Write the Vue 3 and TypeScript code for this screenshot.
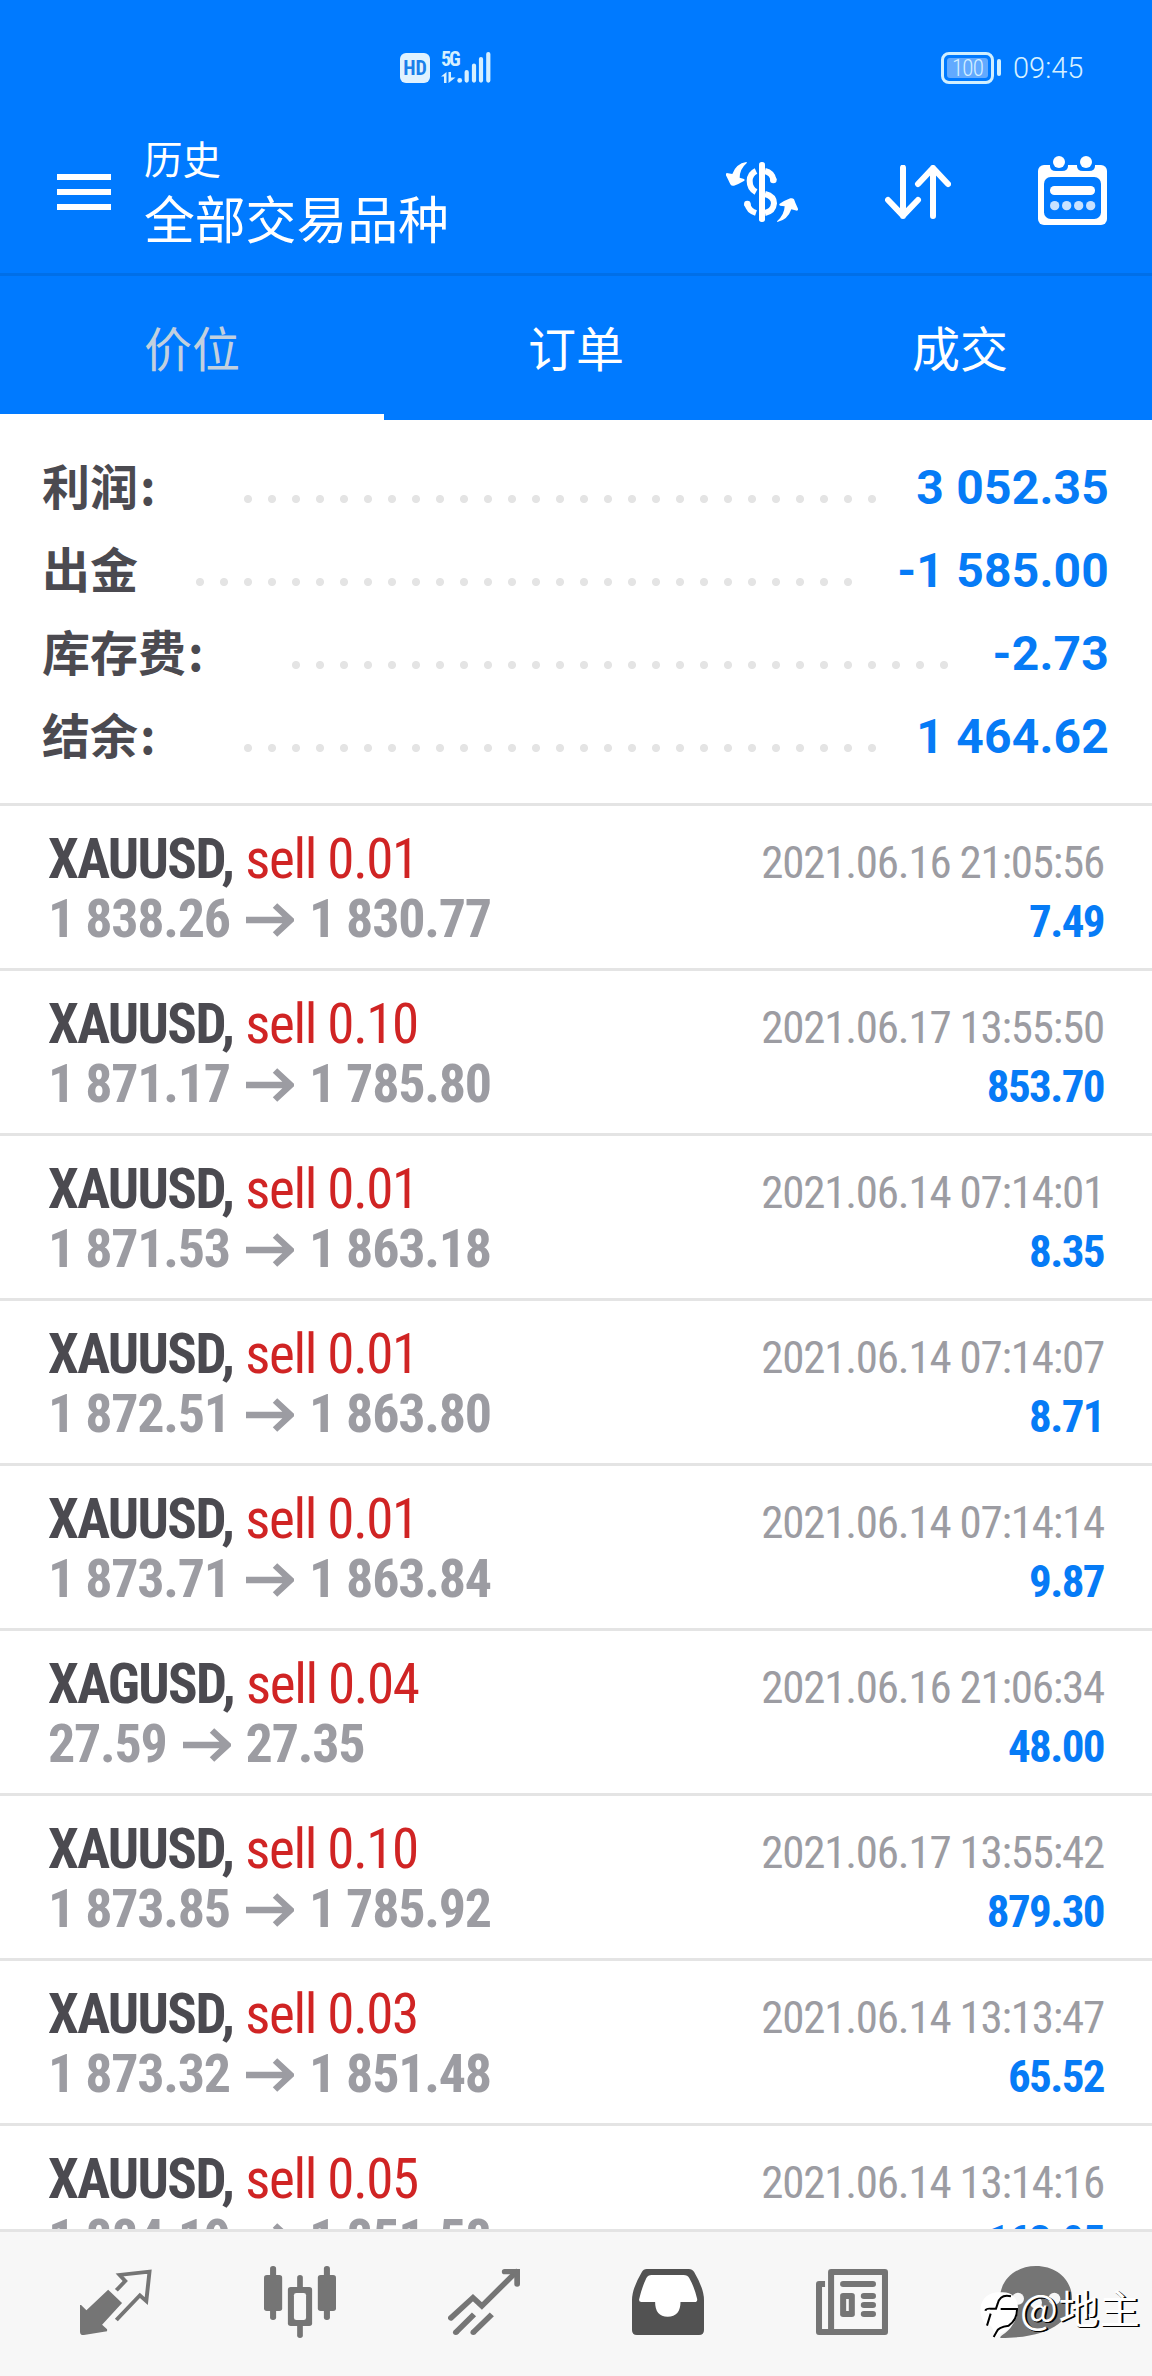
<script setup lang="ts">
interface SummaryRow {
  label: string
  colon: boolean
  value: string
  leaderStart: number
  dots: number
}

interface Deal {
  symbol: string
  volume: string
  open: string
  close: string
  time: string
  profit: string
}

const tabs: string[] = ['价位', '订单', '成交']

const summary: SummaryRow[] = [
  { label: '利润', colon: true, value: '3 052.35', leaderStart: 236, dots: 27 },
  { label: '出金', colon: false, value: '-1 585.00', leaderStart: 188, dots: 28 },
  { label: '库存费', colon: true, value: '-2.73', leaderStart: 284, dots: 28 },
  { label: '结余', colon: true, value: '1 464.62', leaderStart: 236, dots: 27 },
]

const deals: Deal[] = [
  { symbol: 'XAUUSD', volume: '0.01', open: '1 838.26', close: '1 830.77', time: '2021.06.16 21:05:56', profit: '7.49' },
  { symbol: 'XAUUSD', volume: '0.10', open: '1 871.17', close: '1 785.80', time: '2021.06.17 13:55:50', profit: '853.70' },
  { symbol: 'XAUUSD', volume: '0.01', open: '1 871.53', close: '1 863.18', time: '2021.06.14 07:14:01', profit: '8.35' },
  { symbol: 'XAUUSD', volume: '0.01', open: '1 872.51', close: '1 863.80', time: '2021.06.14 07:14:07', profit: '8.71' },
  { symbol: 'XAUUSD', volume: '0.01', open: '1 873.71', close: '1 863.84', time: '2021.06.14 07:14:14', profit: '9.87' },
  { symbol: 'XAGUSD', volume: '0.04', open: '27.59', close: '27.35', time: '2021.06.16 21:06:34', profit: '48.00' },
  { symbol: 'XAUUSD', volume: '0.10', open: '1 873.85', close: '1 785.92', time: '2021.06.17 13:55:42', profit: '879.30' },
  { symbol: 'XAUUSD', volume: '0.03', open: '1 873.32', close: '1 851.48', time: '2021.06.14 13:13:47', profit: '65.52' },
  { symbol: 'XAUUSD', volume: '0.05', open: '1 884.19', close: '1 851.58', time: '2021.06.14 13:14:16', profit: '163.05' },
]
</script>

<template>
  <div class="screen">
    <div class="status">
      <span class="hd">HD</span>
      <div class="network">
        <span class="gen">5G</span>
        <svg class="signal" width="52" height="33" viewBox="0 0 52 33">
          <path d="M1 26.500L6.500 22V33H4V26.500ZM8.500 22H11V27.500H15.500L8.500 33Z" fill="#d6efff" />
          <circle cx="19.700" cy="30.400" r="2.400" fill="#d6efff" />
          <path d="M26.700 22V30.600M34 15.500V30.600M41 9V30.600M48.300 4V30.600" stroke="#d6efff" stroke-width="4.200" stroke-linecap="round" />
        </svg>
      </div>
      <div class="battery"><span>100</span></div>
      <i class="battery-cap"></i>
      <span class="clock">09:45</span>
    </div>

    <header class="bar">
      <div class="menu"><i></i><i></i><i></i></div>
      <div class="titles">
        <div class="small">历史</div>
        <div class="big">全部交易品种</div>
      </div>
      <svg class="ic-money" width="72" height="60" viewBox="78 96 216 180">
        <g fill="#fff">
          <path d="M139 96Q108 101 97 132L80 129Q76 132 79 138Q86 152 91 163Q95 169 102 167Q118 161 133 152Q135 149 132 147L119 143Q119 117 141 98Z" />
          <path d="M232 276Q263 270 274 238L291 242Q296 240 293 234Q286 220 282 208Q278 203 271 205Q255 211 239 221Q236 224 240 227L254 229Q253 255 231 274Z" />
          <rect x="177" y="96" width="18" height="180" rx="8" />
        </g>
        <path d="M168 123Q149 132 149 153Q149 176 168 186M195 123Q217 128 221 151M142 222Q146 242 168 249M195 192Q222 199 222 220Q220 244 195 249" fill="none" stroke="#fff" stroke-width="18" />
        <circle cx="220" cy="150" r="10" fill="#fff" /><circle cx="142" cy="222" r="10" fill="#fff" />
      </svg>
      <svg class="ic-sort" width="66" height="54" viewBox="555 105 198 162">
        <path d="M609 113V258M564 210L609 257L654 210M699 258V114M654 162L699 114L744 162" fill="none" stroke="#fff" stroke-width="18" stroke-linecap="round" stroke-linejoin="round" />
      </svg>
      <svg class="ic-cal" width="69" height="69" viewBox="1014 78 207 207">
        <rect x="1014" y="105" width="207" height="180" rx="18" fill="#fff" />
        <path d="M1050 102V108Q1050 123 1068 123H1086Q1104 123 1104 108V102ZM1131 102V108Q1131 123 1149 123H1167Q1185 123 1185 108V102Z" fill="#007aff" />
        <rect x="1032" y="141" width="171" height="126" rx="20" fill="#007aff" />
        <circle cx="1077" cy="96" r="18" fill="#fff" /><circle cx="1158" cy="96" r="18" fill="#fff" />
        <rect x="1050" y="168" width="135" height="27" rx="13" fill="#fff" />
        <g fill="#c8e2ff"><circle cx="1064" cy="227" r="14" /><circle cx="1100" cy="227" r="14" /><circle cx="1136" cy="227" r="14" /><circle cx="1172" cy="227" r="14" /></g>
      </svg>
    </header>

    <nav class="tabs">
      <div v-for="(tab, i) in tabs" :key="tab" class="tab" :class="{ active: i === 0 }">{{ tab }}</div>
    </nav>

    <section class="summary">
      <div v-for="row in summary" :key="row.label" class="sum-row">
        <span class="label" :style="{ width: row.leaderStart - 42 + 'px' }">{{ row.label }}<span v-if="row.colon" class="colon">:</span></span>
        <span class="leader" :style="{ width: row.dots * 24 + 'px' }"></span>
        <span class="value">{{ row.value }}</span>
      </div>
    </section>

    <main class="deals">
      <div v-for="deal in deals" :key="deal.time + deal.profit" class="deal">
        <div class="line">
          <span class="symbol">{{ deal.symbol }},</span>
          <span class="side">sell {{ deal.volume }}</span>
          <span class="time">{{ deal.time }}</span>
        </div>
        <div class="line">
          <span class="price">{{ deal.open }}</span>
          <svg class="arrow" width="48" height="34" viewBox="0 0 48 34">
            <path d="M0 17H45M29 2.500L44.500 17L29 31.500" fill="none" stroke="#9c9ca2" stroke-width="6.500" />
          </svg>
          <span class="price">{{ deal.close }}</span>
          <span class="profit">{{ deal.profit }}</span>
        </div>
      </div>
    </main>

    <footer class="dock">
      <div class="item">
        <svg width="72" height="72" viewBox="224 438 202 216" preserveAspectRatio="none">
          <path d="M303 509L342 549L286 614L300 628V634L235 645Q224 646 224 635V555H227L242 571Z" fill="#757575" />
          <path d="M326 511L351 483L335 465L419 455L410 543L392 526L326 600" fill="none" stroke="#757575" stroke-width="11" />
        </svg>
      </div>
      <div class="item">
        <svg width="72" height="72" viewBox="739 438 202 216" preserveAspectRatio="none">
          <g fill="#757575">
            <rect x="756" y="438" width="17" height="162" rx="8" /><rect x="739" y="465" width="51" height="108" rx="8" />
            <rect x="907" y="438" width="17" height="162" rx="8" /><rect x="890" y="465" width="51" height="108" rx="8" />
            <rect x="832" y="465" width="16" height="189" rx="8" /><rect x="806" y="501" width="68" height="117" rx="8" />
          </g>
          <rect x="823" y="519" width="34" height="81" rx="7" fill="#f7f7f7" />
        </svg>
      </div>
      <div class="item">
        <svg width="72" height="72" viewBox="1254 438 202 216" preserveAspectRatio="none">
          <g fill="none" stroke="#757575" stroke-width="16">
            <path d="M1262 594L1324 533L1349 558L1446 455" stroke-linecap="round" />
            <path d="M1413 455H1448V492" stroke-linecap="round" />
            <path d="M1327 583L1276 637M1377 583L1325 637" />
          </g>
          <g fill="#757575"><circle cx="1276" cy="637" r="8" /><circle cx="1325" cy="637" r="8" /></g>
        </svg>
      </div>
      <div class="item">
        <svg width="72" height="72" viewBox="191 438 190 216" preserveAspectRatio="none">
          <path d="M230 447H341Q350 447 355 456Q381 506 381 540V630Q381 645 368 645H204Q191 645 191 630V540Q191 506 217 456Q221 447 230 447Z" fill="#525252" />
          <path d="M243 465H327Q338 465 342 474Q356 502 363 537Q364 546 356 546H319Q319 590 285 590Q252 590 252 546H216Q208 546 210 537Q217 502 229 474Q233 465 243 465Z" fill="#fff" />
        </svg>
      </div>
      <div class="item">
        <svg width="72" height="72" viewBox="678 438 191 216" preserveAspectRatio="none">
          <path fill-rule="evenodd" d="M718 447H861Q869 447 869 456V636Q869 645 861 645H686Q678 645 678 636V492Q678 483 686 483H702V501H694V627H710V456Q710 447 718 447ZM726 465V627H853V465Z" fill="#757575" />
          <g fill="#757575"><rect x="742" y="483" width="95" height="18" rx="8" /><rect x="742" y="519" width="39" height="72" rx="8" /><rect x="797" y="519" width="40" height="18" rx="8" /><rect x="797" y="546" width="40" height="18" rx="8" /><rect x="797" y="573" width="40" height="18" rx="8" /></g>
          <rect x="758" y="537" width="7" height="36" fill="#f7f7f7" />
        </svg>
      </div>
      <div class="item">
        <svg width="72" height="72" viewBox="120 78 216 216">
          <path d="M228 78C290 78 336 120 336 176C336 240 270 294 122 294Q118 292 126 286Q150 270 156 256Q120 224 120 176C120 120 166 78 228 78Z" fill="#757575" />
          <g fill="#f7f7f7"><circle cx="174" cy="176" r="18" /><circle cx="228" cy="188" r="18" /><circle cx="283" cy="176" r="18" /></g>
        </svg>
      </div>
    </footer>

    <div class="mark">
      <svg width="40" height="48" viewBox="60 154 120 144">
        <path d="M62 205C64 170 96 154 124 158C158 156 176 178 174 212C170 250 148 274 116 284L102 296C104 270 94 250 76 254C64 240 60 222 62 205Z" fill="#fff" />
        <path d="M153 170Q121 162 113 192L108 207H92Q78 206 76 213M92 222L81 258M122 208H171Q172 240 146 258Q114 262 110 276L101 292" fill="none" stroke="#000" stroke-width="6" />
      </svg>
      <span>@地主</span>
    </div>
  </div>
</template>

<style>
body {
  margin: 0;
}
</style>

<style scoped>
.screen {
  position: relative;
  display: flex;
  flex-direction: column;
  width: 1152px;
  height: 2376px;
  overflow: hidden;
  background: #fff;
  font-family: Roboto, "Noto Sans CJK SC", sans-serif;
}
.status {
  display: flex;
  align-items: flex-start;
  box-sizing: border-box;
  height: 120px;
  padding: 51px 0 0 400px;
  background: #007aff;
  color: #d6f0ff;
}
.hd {
  width: 30px;
  height: 30px;
  margin-top: 2px;
  border-radius: 6px;
  background: #e0f2ff;
  color: #1b80ea;
  font: 700 20px/31px Roboto, sans-serif;
  font-stretch: 75%;
  text-align: center;
}
.network {
  position: relative;
  width: 52px;
  margin-left: 10px;
}
.gen {
  position: absolute;
  left: 1px;
  top: -2px;
  font: 700 20px/20px Roboto, sans-serif;
  font-stretch: 75%;
  letter-spacing: -2px;
}
.signal {
  display: block;
  margin-top: -1px;
}
.battery {
  box-sizing: border-box;
  width: 53px;
  height: 32px;
  margin: 1px 0 0 449px;
  padding: 3px;
  border: 3px solid #d0efff;
  border-radius: 8px;
}
.battery span {
  display: block;
  height: 20px;
  border-radius: 3px;
  background: #62aaff;
  font: 300 23px/21px Roboto, sans-serif;
  font-stretch: 75%;
  letter-spacing: -0.8px;
  text-align: center;
}
.battery-cap {
  width: 4px;
  height: 17px;
  margin: 8px 0 0 3px;
  border-radius: 2px;
  background: #d0efff;
}
.clock {
  margin-left: 12px;
  font: 300 29px/34px Roboto, sans-serif;
}
.bar {
  display: flex;
  align-items: flex-start;
  box-sizing: border-box;
  height: 156px;
  padding-left: 57px;
  background: #007aff;
  border-bottom: 3px solid #006fe8;
  color: #fff;
}
.menu {
  display: flex;
  flex-direction: column;
  gap: 9px;
  width: 54px;
  margin-top: 54px;
}
.menu i {
  height: 6px;
  background: #fff;
}
.titles {
  width: 580px;
  margin: 15px 0 0 33px;
  font-family: "Noto Sans CJK SC", sans-serif;
}
.small {
  font-size: 38.5px;
  line-height: 44px;
}
.big {
  margin-top: 8px;
  font-size: 50.8px;
  line-height: 60px;
}
.ic-money {
  margin: 42px 0 0 2px;
}
.ic-sort {
  margin: 45px 0 0 87px;
}
.ic-cal {
  margin: 36px 0 0 87px;
}
.tabs {
  display: flex;
  height: 144px;
  background: #007aff;
}
.tab {
  box-sizing: border-box;
  flex: 1;
  height: 144px;
  border-bottom: 6px solid #007aff;
  color: #fff;
  font: 400 48px/140px "Noto Sans CJK SC", sans-serif;
  text-align: center;
}
.tab.active {
  border-color: #fff;
  color: #c2d0de;
}
.summary {
  box-sizing: border-box;
  height: 386px;
  padding: 26px 42px 0;
  border-bottom: 3px solid #e4e4e4;
}
.sum-row {
  display: flex;
  height: 83px;
}
.label {
  flex: none;
  color: #4b4a50;
  font: 700 48px/77px "Noto Sans CJK SC", sans-serif;
}
.colon {
  margin-left: 2px;
}
.leader {
  height: 24px;
  margin-top: 41px;
  background: radial-gradient(circle at center, #e4e4e4 3.600px, transparent 4.500px) 0 0 / 24px 24px;
}
.value {
  margin-left: auto;
  margin-right: 1px;
  color: #067bf6;
  font-size: 48px;
  line-height: 84px;
  font-weight: 700;
  letter-spacing: 0.2px;
  white-space: nowrap;
}
.deals {
  height: 1423px;
  overflow: hidden;
}
.deal {
  box-sizing: border-box;
  height: 165px;
  padding: 21px 48px 0;
  border-bottom: 3px solid #e4e4e4;
  font-stretch: 75%;
}
.line {
  display: flex;
  align-items: baseline;
  height: 60px;
  line-height: 64px;
  white-space: nowrap;
}
.symbol {
  color: #4b4a50;
  font-size: 55px;
  font-weight: 700;
  letter-spacing: -1.65px;
}
.side {
  margin-left: 12px;
  color: #d02424;
  font-size: 55px;
  letter-spacing: -1.35px;
}
.time {
  margin-left: auto;
  color: #9c9ca2;
  font-size: 45px;
  letter-spacing: -1.23px;
}
.price {
  color: #9c9ca2;
  font-size: 54px;
  font-weight: 700;
  letter-spacing: -1.25px;
}
.arrow {
  flex: none;
  margin: 0 15px 0 16px;
}
.profit {
  margin-left: auto;
  color: #067bf6;
  font-size: 45px;
  font-weight: 700;
  letter-spacing: -1.6px;
}
.dock {
  display: flex;
  box-sizing: border-box;
  height: 147px;
  padding: 34px 24px 0;
  border-top: 3px solid #e4e4e4;
  background: #f7f7f7;
}
.item {
  width: 184px;
  text-align: center;
}
.mark {
  position: absolute;
  left: 980px;
  top: 2280px;
  display: flex;
  align-items: flex-start;
  color: #fff;
  font: 400 40px/54px "Noto Sans CJK SC", sans-serif;
  letter-spacing: 1px;
  text-shadow: 1px 1px 0 #000, 2px 1px 0 #000;
  white-space: nowrap;
}
.mark svg {
  margin-top: 11px;
}
</style>
